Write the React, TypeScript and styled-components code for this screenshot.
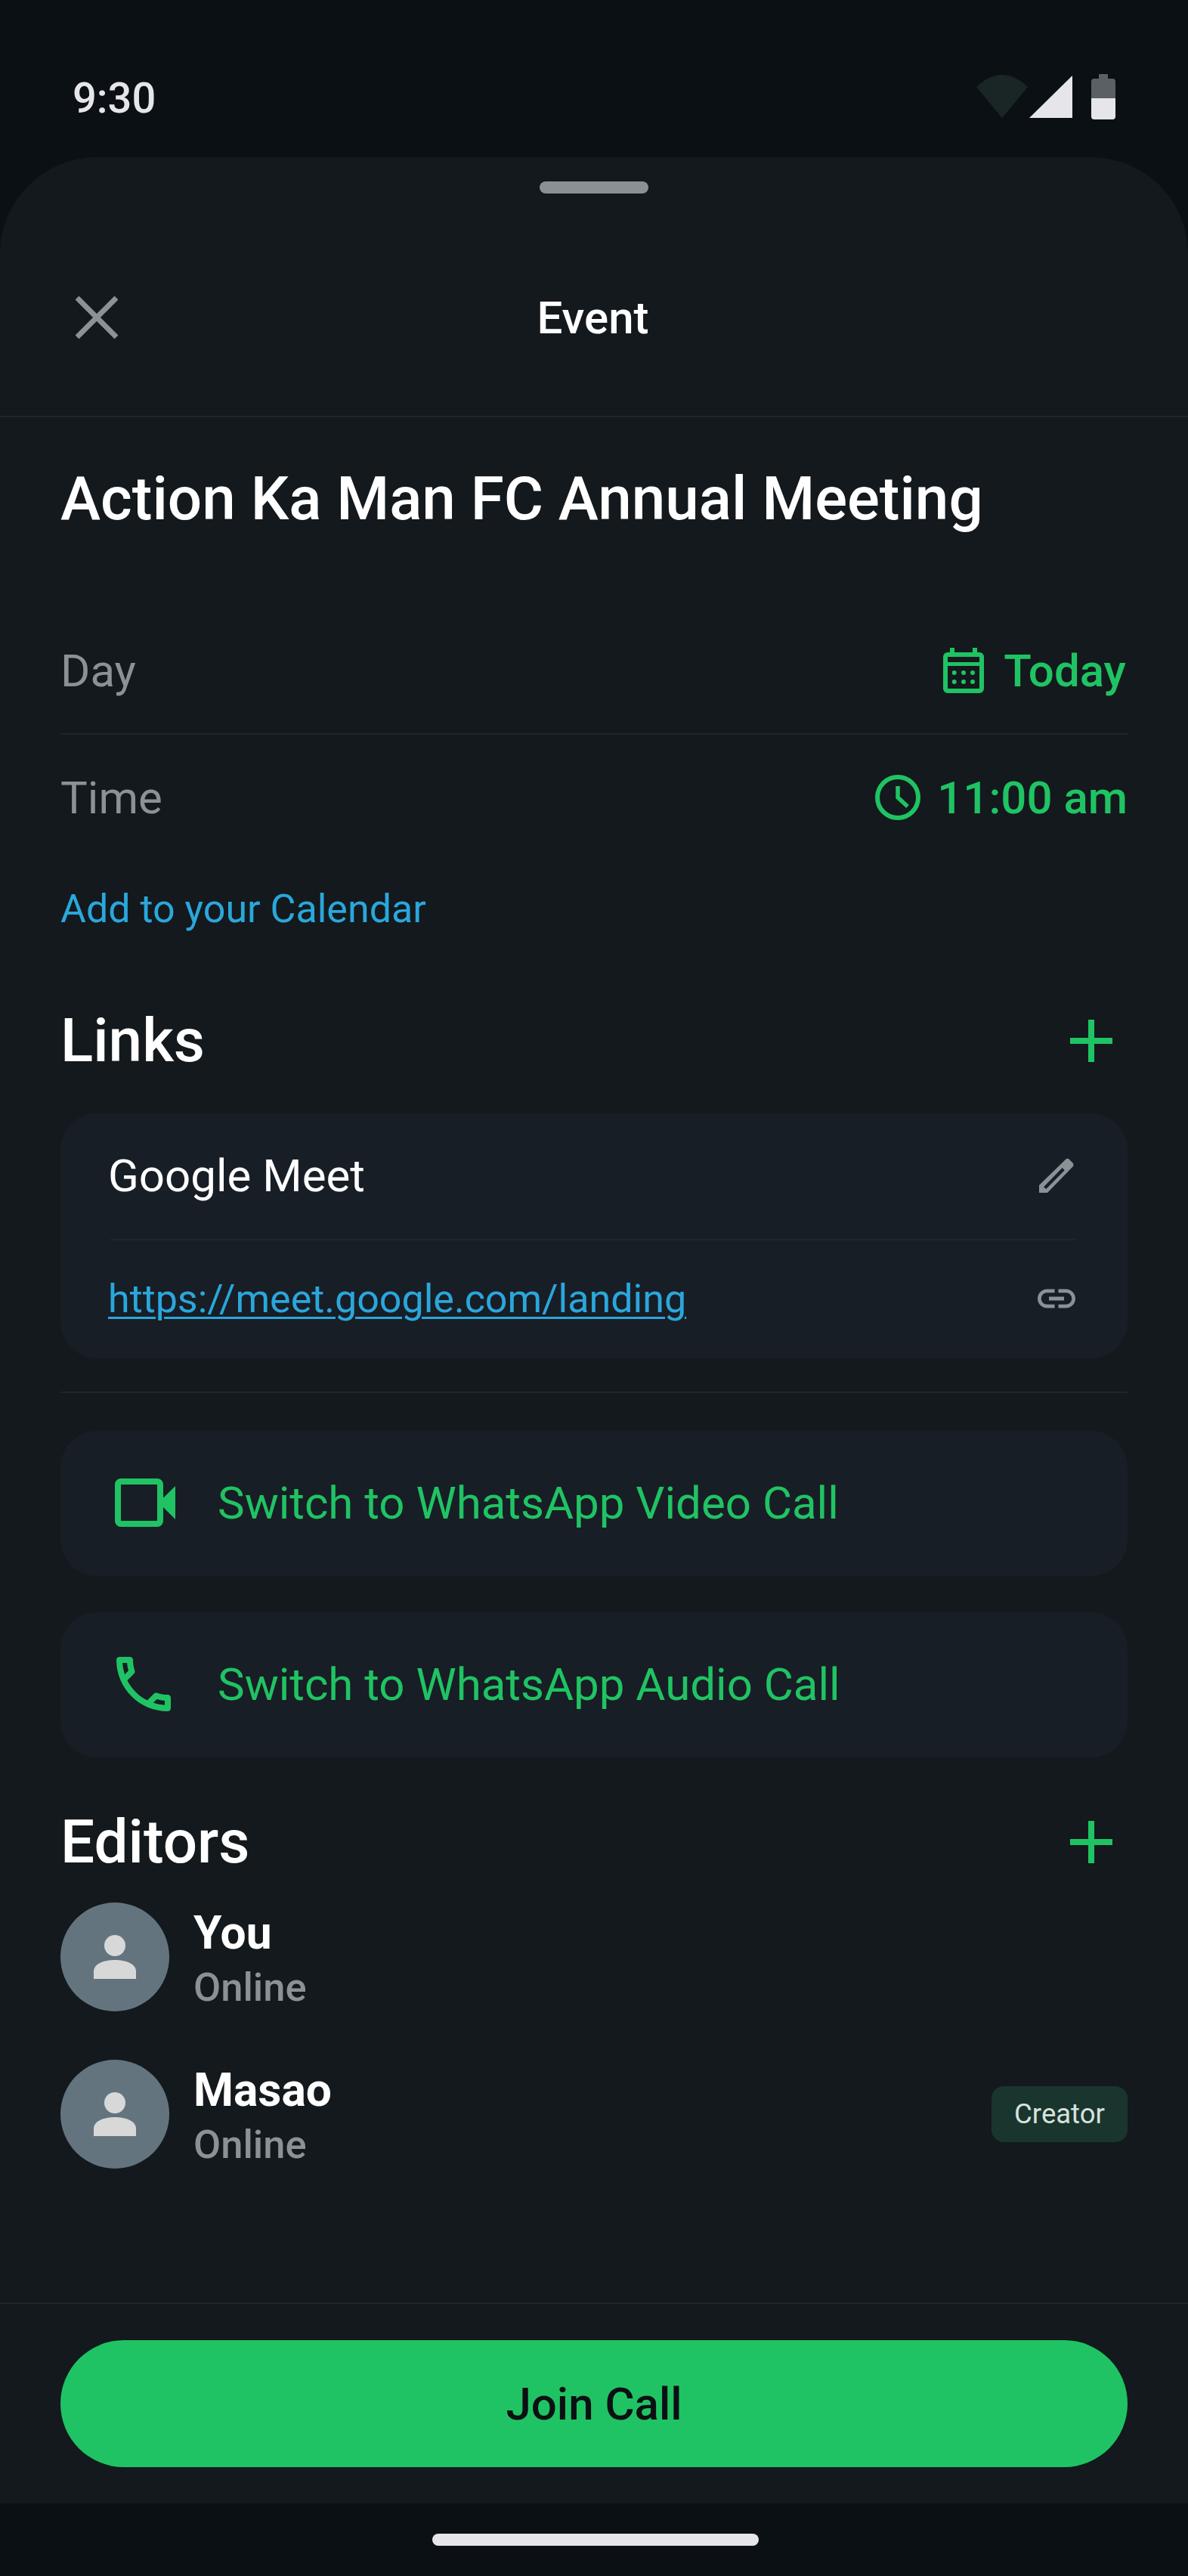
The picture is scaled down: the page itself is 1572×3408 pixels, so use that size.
import React from "react"
import styled, { createGlobalStyle } from "styled-components"

const green = "#20c363"
const muted = "#8a9296"
const line = "#1c2829"

const GlobalStyle = createGlobalStyle`
  html, body {
    margin: 0;
    padding: 0;
    background: #0b1014;
  }
  * {
    box-sizing: border-box;
  }
`

const Phone = styled.div`
  width: 1572px;
  height: 3408px;
  display: flex;
  flex-direction: column;
  background: #0b1014;
  font-family: Roboto, "Liberation Sans", sans-serif;
  color: #fff;
  overflow: hidden;
`

const StatusBar = styled.div`
  height: 208px;
  flex: none;
  padding: 48px 96px 0 96px;
  display: flex;
  align-items: center;
  justify-content: space-between;
`

const Clock = styled.div`
  margin-top: 3px;
  font-size: 56px;
  font-weight: 500;
  color: #e6e6ea;
`

const Sheet = styled.div`
  flex: 1;
  display: flex;
  flex-direction: column;
  background: #13191d;
  border-radius: 128px 128px 0 0;
`

const Handle = styled.div`
  width: 144px;
  height: 16px;
  margin: 32px auto 34px;
  border-radius: 8px;
  background: #8a9194;
`

const Header = styled.header`
  height: 262px;
  flex: none;
  padding: 0 100px;
  display: grid;
  grid-template-columns: 1fr auto 1fr;
  align-items: center;
  border-bottom: 2px solid ${line};
`

const HeaderTitle = styled.div`
  margin-left: -3px;
  font-size: 60px;
  font-weight: 500;
`

const Body = styled.main`
  flex: 1;
  padding: 0 80px;
  display: flex;
  flex-direction: column;
`

const Title = styled.h1`
  margin: 60px 0 96px;
  font-size: 80px;
  line-height: 96px;
  font-weight: 500;
`

const InfoRow = styled.div<{ $divided?: boolean }>`
  height: ${(p) => (p.$divided ? 168 : 166)}px;
  display: flex;
  align-items: center;
  justify-content: space-between;
  border-bottom: ${(p) => (p.$divided ? `2px solid ${line}` : "none")};
`

const InfoLabel = styled.div`
  font-size: 60px;
  color: ${muted};
`

const InfoValue = styled.div<{ $gap: number; $inset?: number }>`
  display: flex;
  align-items: center;
  gap: ${(p) => p.$gap}px;
  margin-right: ${(p) => p.$inset ?? 0}px;
  font-size: 60px;
  font-weight: 500;
  color: ${green};
`

const CalendarLink = styled.a`
  margin-top: 33px;
  font-size: 52px;
  line-height: 64px;
  color: #2aa7dc;
`

const SectionHeader = styled.div<{ $top: number }>`
  height: 96px;
  flex: none;
  margin-top: ${(p) => p.$top}px;
  display: flex;
  align-items: center;
  justify-content: space-between;
  padding-right: 20px;
`

const SectionTitle = styled.h2`
  margin: 0;
  font-size: 80px;
  font-weight: 500;
`

const LinkCard = styled.section`
  margin-top: 48px;
  padding: 0 68px 0 66px;
  border-radius: 48px;
  background: #181e26;
`

const LinkRow = styled.div<{ $height: number; $divided?: boolean }>`
  height: ${(p) => p.$height}px;
  padding-bottom: 2px;
  display: flex;
  align-items: center;
  justify-content: space-between;
  border-bottom: ${(p) => (p.$divided ? `2px solid ${line}` : "none")};
`

const LinkName = styled.div`
  margin-left: -3px;
  font-size: 60px;
`

const LinkUrl = styled.a`
  margin-left: -3px;
  font-size: 52px;
  color: #2aa7dc;
  text-decoration: underline;
  text-underline-offset: 6px;
  text-decoration-thickness: 3px;
`

const IconSlot = styled.div`
  width: 52px;
  display: flex;
  justify-content: center;
  align-items: center;
  color: ${muted};

  svg {
    flex: none;
  }
`

const Rule = styled.hr`
  width: 100%;
  height: 2px;
  margin: 44px 0 50px;
  border: 0;
  background: ${line};
`

const ActionList = styled.div`
  display: flex;
  flex-direction: column;
  gap: 48px;
`

const ActionCard = styled.div`
  height: 192px;
  padding: 0 0 2px 64px;
  display: flex;
  align-items: center;
  gap: 48px;
  border-radius: 48px;
  background: #181e26;
  color: ${green};
  font-size: 60px;
`

const ActionIcon = styled.div`
  width: 96px;
  height: 96px;
  display: flex;
  align-items: center;
  justify-content: center;
`

const EditorList = styled.div`
  margin-top: 32px;
  display: flex;
  flex-direction: column;
  gap: 64px;
`

const EditorRow = styled.div`
  height: 144px;
  display: flex;
  align-items: center;
  gap: 32px;
`

const Avatar = styled.div`
  width: 144px;
  height: 144px;
  flex: none;
  border-radius: 50%;
  background: #64747f;
  display: flex;
  align-items: center;
  justify-content: center;
`

const EditorText = styled.div`
  flex: 1;
  padding-top: 8px;
`

const EditorName = styled.div`
  font-size: 60.5px;
  line-height: 72px;
  font-weight: 700;
`

const EditorStatus = styled.div`
  font-size: 52.5px;
  line-height: 70px;
  font-weight: 500;
  color: ${muted};
`

const Badge = styled.div`
  height: 74px;
  width: 180px;
  padding-bottom: 2px;
  display: flex;
  align-items: center;
  justify-content: center;
  border-radius: 16px;
  background: #1a352e;
  color: #d6e2dd;
  font-size: 36.5px;
`

const Footer = styled.footer`
  flex: none;
  padding: 48px 80px;
  border-top: 2px solid ${line};
`

const JoinButton = styled.button`
  width: 100%;
  height: 168px;
  border: 0;
  border-radius: 84px;
  background: ${green};
  color: #0b1014;
  font-family: inherit;
  font-size: 60px;
  font-weight: 500;
`

const NavArea = styled.div`
  height: 96px;
  flex: none;
  padding: 40px 0 0 4px;
  display: flex;
  justify-content: center;
`

const HomeIndicator = styled.div`
  width: 432px;
  height: 16px;
  border-radius: 8px;
  background: #e6e6ea;
`

const StatusIcons = () => (
  <svg width="184" height="60" viewBox="1292 104 184 60">
    <path d="M1326 162 L1292 121 Q1326 89 1360 121 Z" fill="#1a2626" />
    <path d="M1419 106 V162 H1362 Z" fill="#e6e6ea" />
    <path d="M1454 104 H1466 V110 H1472 Q1476 110 1476 114 V136 H1444 V114 Q1444 110 1448 110 H1454 Z" fill="#5a6166" />
    <path d="M1444 136 H1476 V160 Q1476 164 1472 164 H1448 Q1444 164 1444 160 Z" fill="#e6e6ea" />
  </svg>
)

const CloseIcon = () => (
  <svg width="56" height="56" viewBox="0 0 56 56" stroke={muted} strokeWidth="7" fill="none">
    <path d="M2 2 L54 54 M54 2 L2 54" />
  </svg>
)

const CalendarIcon = () => (
  <svg width="54" height="60" viewBox="0 0 54 60" fill={green}>
    <rect x="9" y="0" width="6" height="8" />
    <rect x="39" y="0" width="6" height="8" />
    <rect x="3" y="9" width="48" height="48" rx="3" fill="none" stroke={green} strokeWidth="6" />
    <rect x="3" y="19" width="48" height="5" />
    {[33, 45].map((y) =>
      [14.7, 27, 39].map((x) => <circle key={`${x}-${y}`} cx={x} cy={y} r="3" />)
    )}
  </svg>
)

const TimeIcon = () => (
  <svg width="60" height="60" viewBox="0 0 60 60" fill="none" stroke={green}>
    <circle cx="30" cy="30" r="27" strokeWidth="6" />
    <path d="M30 15 V30 L43 42" strokeWidth="5.5" />
  </svg>
)

const PlusIcon = () => (
  <svg width="56" height="56" viewBox="0 0 56 56" stroke={green} strokeWidth="8">
    <path d="M28 0 V56 M0 28 H56" />
  </svg>
)

const PencilIcon = () => (
  <svg width="46" height="46" viewBox="0 0 46 46" fill={muted}>
    <path
      fillRule="evenodd"
      d="M0 46 V36 L35 2 Q37 0 39 1 L45 7 Q46 9 45 11 L11 46 Z M6 38.3 L9.3 41 L33.7 16.3 L30.7 13 Z"
    />
  </svg>
)

const ChainIcon = () => (
  <svg width="60" height="60" viewBox="0 0 24 24" fill={muted}>
    <path d="M3.9 12c0-1.71 1.39-3.1 3.1-3.1h4V7H7c-2.76 0-5 2.24-5 5s2.24 5 5 5h4v-1.9H7c-1.71 0-3.1-1.39-3.1-3.1zM8 13h8v-2H8v2zm9-6h-4v1.9h4c1.71 0 3.1 1.39 3.1 3.1s-1.39 3.1-3.1 3.1h-4V17h4c2.76 0 5-2.24 5-5s-2.24-5-5-5z" />
  </svg>
)

const VideoIcon = () => (
  <svg width="80" height="64" viewBox="0 0 80 64" fill={green}>
    <rect x="4" y="4" width="56" height="56" rx="4" fill="none" stroke={green} strokeWidth="8" />
    <path d="M64 25.7 L80 10 V54 L64 38 Z" />
  </svg>
)

const PhoneIcon = () => (
  <svg width="96" height="96" viewBox="0.5 0 24 24" fill={green}>
    <path d="M6.54 5c.06.89.21 1.76.45 2.59l-1.2 1.2c-.41-1.2-.67-2.47-.76-3.79h1.51m9.86 12.02c.85.24 1.72.39 2.6.45v1.49c-1.32-.09-2.59-.35-3.8-.75l1.2-1.19M7.5 3H4c-.55 0-1 .45-1 1 0 9.39 7.61 17 17 17 .55 0 1-.45 1-1v-3.49c0-.55-.45-1-1-1-1.24 0-2.45-.2-3.57-.57-.1-.04-.21-.05-.31-.05-.26 0-.51.1-.71.29l-2.2 2.2c-2.83-1.45-5.15-3.76-6.59-6.59l2.2-2.2c.28-.28.36-.67.25-1.02C8.7 6.45 8.5 5.25 8.5 4c0-.55-.45-1-1-1z" />
  </svg>
)

const PersonIcon = () => (
  <svg width="56" height="58" viewBox="0 0 56 58" fill="#d8d8d8">
    <circle cx="28" cy="14" r="14" />
    <path d="M0 58 V48 C0 38 14 33 28 33 C42 33 56 38 56 48 V58 Z" />
  </svg>
)

const editors = [
  { name: "You", status: "Online" },
  { name: "Masao", status: "Online", creator: true },
]

export default function App() {
  return (
    <Phone>
      <GlobalStyle />
      <StatusBar>
        <Clock>9:30</Clock>
        <StatusIcons />
      </StatusBar>
      <Sheet>
        <Handle />
        <Header>
          <CloseIcon />
          <HeaderTitle>Event</HeaderTitle>
        </Header>
        <Body>
          <Title>Action Ka Man FC Annual Meeting</Title>
          <InfoRow $divided>
            <InfoLabel>Day</InfoLabel>
            <InfoValue $gap={26} $inset={2}>
              <CalendarIcon />
              Today
            </InfoValue>
          </InfoRow>
          <InfoRow>
            <InfoLabel>Time</InfoLabel>
            <InfoValue $gap={22}>
              <TimeIcon />
              11:00 am
            </InfoValue>
          </InfoRow>
          <CalendarLink>Add to your Calendar</CalendarLink>

          <SectionHeader $top={94}>
            <SectionTitle>Links</SectionTitle>
            <PlusIcon />
          </SectionHeader>
          <LinkCard>
            <LinkRow $height={168} $divided>
              <LinkName>Google Meet</LinkName>
              <IconSlot>
                <PencilIcon />
              </IconSlot>
            </LinkRow>
            <LinkRow $height={156}>
              <LinkUrl>https://meet.google.com/landing</LinkUrl>
              <IconSlot>
                <ChainIcon />
              </IconSlot>
            </LinkRow>
          </LinkCard>
          <Rule />
          <ActionList>
            <ActionCard>
              <ActionIcon>
                <VideoIcon />
              </ActionIcon>
              Switch to WhatsApp Video Call
            </ActionCard>
            <ActionCard>
              <ActionIcon>
                <PhoneIcon />
              </ActionIcon>
              Switch to WhatsApp Audio Call
            </ActionCard>
          </ActionList>

          <SectionHeader $top={64}>
            <SectionTitle>Editors</SectionTitle>
            <PlusIcon />
          </SectionHeader>
          <EditorList>
            {editors.map((editor) => (
              <EditorRow key={editor.name}>
                <Avatar>
                  <PersonIcon />
                </Avatar>
                <EditorText>
                  <EditorName>{editor.name}</EditorName>
                  <EditorStatus>{editor.status}</EditorStatus>
                </EditorText>
                {editor.creator && <Badge>Creator</Badge>}
              </EditorRow>
            ))}
          </EditorList>
        </Body>
        <Footer>
          <JoinButton>Join Call</JoinButton>
        </Footer>
      </Sheet>
      <NavArea>
        <HomeIndicator />
      </NavArea>
    </Phone>
  )
}
